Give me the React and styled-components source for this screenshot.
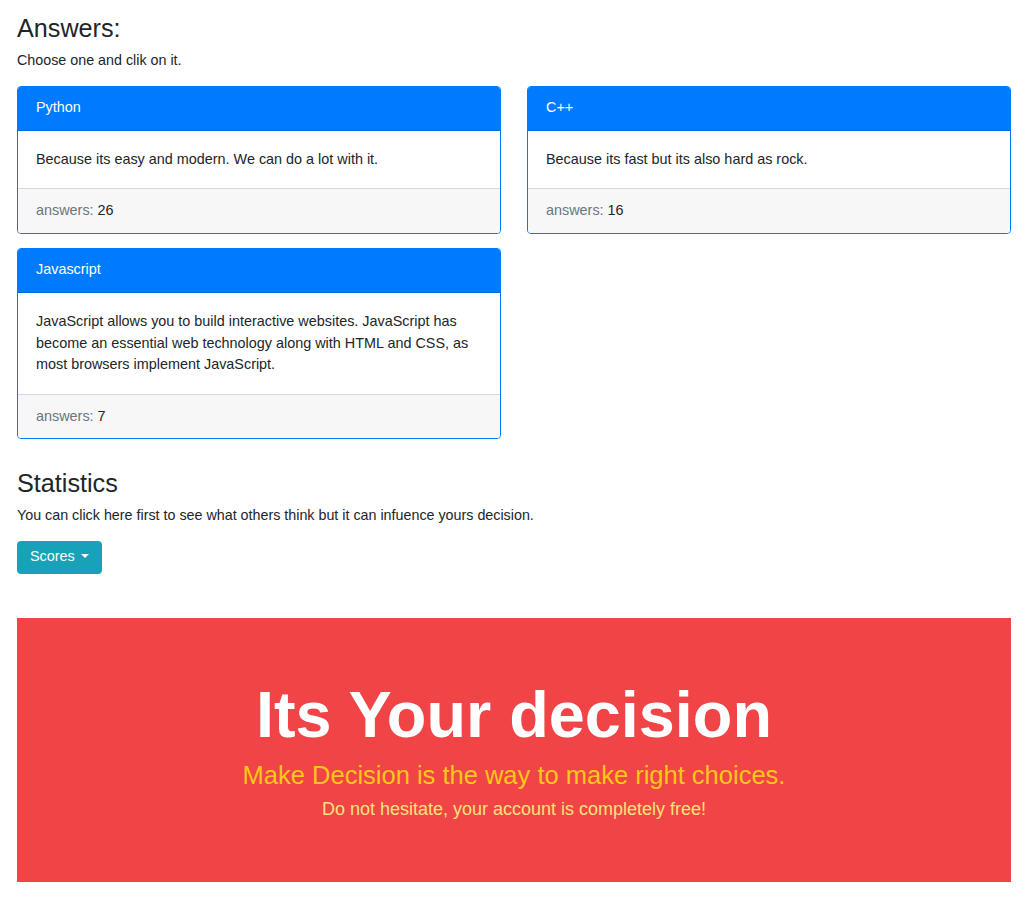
import React from 'react'
import styled, { createGlobalStyle } from 'styled-components'

const answers = [
  {
    title: 'Python',
    text: 'Because its easy and modern. We can do a lot with it.',
    count: 26,
  },
  {
    title: 'C++',
    text: 'Because its fast but its also hard as rock.',
    count: 16,
  },
  {
    title: 'Javascript',
    text: 'JavaScript allows you to build interactive websites. JavaScript has become an essential web technology along with HTML and CSS, as most browsers implement JavaScript.',
    count: 7,
  },
]

const AnswerCard = ({ title, text, count }) => (
  <S.Card>
    <S.CardHeader>{title}</S.CardHeader>
    <S.CardBody>{text}</S.CardBody>
    <S.CardFooter>
      <S.Muted>answers:</S.Muted> {count}
    </S.CardFooter>
  </S.Card>
)

const App = () => {
  return (
    <>
      <GlobalStyle />
      <S.Page>
        <S.Title>Answers:</S.Title>
        <S.Text>Choose one and clik on it.</S.Text>
        <S.Grid>
          {answers.map((a) => (
            <AnswerCard key={a.title} {...a} />
          ))}
        </S.Grid>

        <S.Title $top={29}>Statistics</S.Title>
        <S.Text>You can click here first to see what others think but it can infuence yours decision.</S.Text>
        <S.Button>
          Scores <S.Caret />
        </S.Button>

        <S.Banner>
          <S.BigTitle>Its Your decision</S.BigTitle>
          <S.Lead>Make Decision is the way to make right choices.</S.Lead>
          <S.SubLead>Do not hesitate, your account is completely free!</S.SubLead>
        </S.Banner>
      </S.Page>
    </>
  )
}

export default App

const GlobalStyle = createGlobalStyle`
  html, body {
    margin: 0;
    padding: 0;
    background: #fff;
  }
  body {
    font-family: "Liberation Sans", Arial, sans-serif;
    font-size: 14.4px;
    line-height: 1.5;
    color: #212529;
  }
  * {
    box-sizing: border-box;
  }
`

const S = {
  Page: styled.div`
    padding: 13px 19px 20px 17px;
  `,
  Title: styled.h3`
    margin: ${(p) => p.$top || 0}px 0 7px;
    font-size: 25.2px;
    font-weight: 500;
    line-height: 1.2;
  `,
  Text: styled.p`
    margin: 0 0 14px;
    font-size: 14.3px;
  `,
  Grid: styled.div`
    display: grid;
    grid-template-columns: 1fr 1fr;
    column-gap: 26px;
    row-gap: 14px;
    align-items: start;
  `,
  Card: styled.div`
    border: 1px solid #007bff;
    border-radius: 4px;
    overflow: hidden;
    background: #fff;
  `,
  CardHeader: styled.div`
    background: #007bff;
    color: #fff;
    padding: 10.8px 18px;
    border-bottom: 1px solid rgba(0, 0, 0, 0.125);
  `,
  CardBody: styled.div`
    padding: 18px;
  `,
  CardFooter: styled.div`
    background: #f7f7f7;
    padding: 10.8px 18px;
    border-top: 1px solid rgba(0, 0, 0, 0.125);
  `,
  Muted: styled.span`
    color: #6c757d;
  `,
  Button: styled.button`
    display: flex;
    width: max-content;
    align-items: center;
    gap: 6px;
    height: 33px;
    padding: 0 12px;
    background: #17a2b8;
    color: #fff;
    border: 1px solid #17a2b8;
    border-radius: 3.6px;
    font-family: inherit;
    font-size: 14.4px;
    line-height: 1.5;
    cursor: pointer;
  `,
  Caret: styled.span`
    display: inline-block;
    width: 0;
    height: 0;
    margin-top: -2px;
    border-top: 4.5px solid #fff;
    border-left: 4px solid transparent;
    border-right: 4px solid transparent;
  `,
  Banner: styled.div`
    margin-top: 44px;
    height: 264px;
    background: #f04446;
    display: flex;
    flex-direction: column;
    align-items: center;
    justify-content: center;
    text-align: center;
  `,
  BigTitle: styled.h1`
    margin: 0 0 6px;
    font-size: 64.8px;
    font-weight: 700;
    line-height: 1.2;
    color: #fff;
  `,
  Lead: styled.p`
    margin: 0;
    font-size: 25.5px;
    line-height: 1.2;
    color: #ffc61a;
  `,
  SubLead: styled.p`
    margin: 6px 0 0;
    font-size: 18px;
    line-height: 1.5;
    color: #fbe27a;
  `,
}
